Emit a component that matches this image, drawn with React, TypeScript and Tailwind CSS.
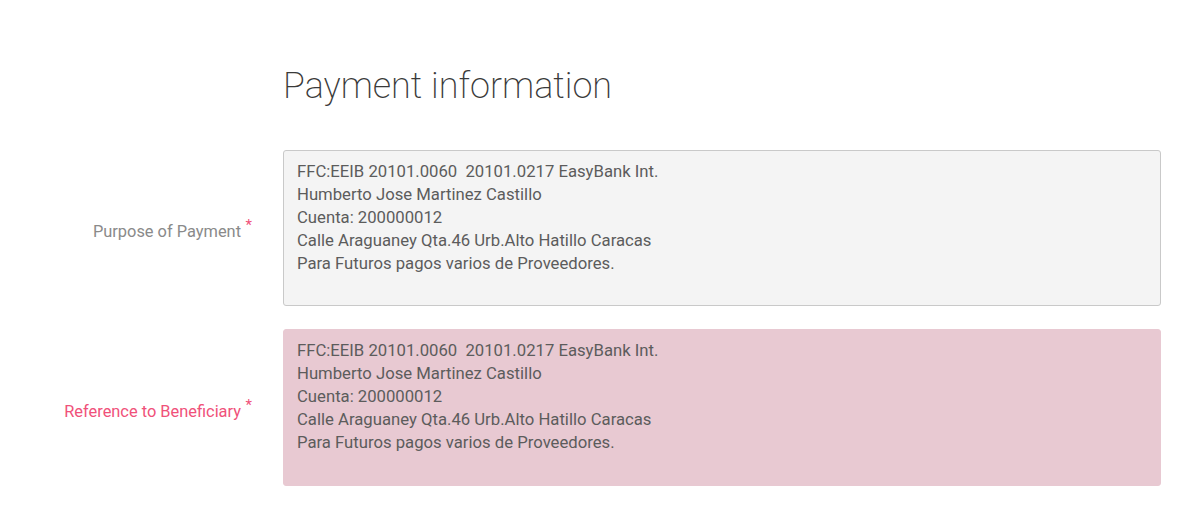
import React from "react";

const details = [
  "FFC:EEIB 20101.0060\u00a0 20101.0217 EasyBank Int.",
  "Humberto Jose Martinez Castillo",
  "Cuenta: 200000012",
  "Calle Araguaney Qta.46 Urb.Alto Hatillo Caracas",
  "Para Futuros pagos varios de Proveedores.",
];

function Field({
  label,
  invalid,
  heightClass,
}: {
  label: string;
  invalid?: boolean;
  heightClass: string;
}) {
  return (
    <div className="flex items-center">
      <div className="w-[283px] shrink-0 flex justify-end pr-[42px] pt-[9px]">
        <span
          className={
            "relative text-[16.4px] " + (invalid ? "text-[#f0517a]" : "text-[#8a8a8a]")
          }
        >
          {label}
          <span className="absolute -right-[11px] -top-[6px] text-[#f0517a] text-[15px]">*</span>
        </span>
      </div>
      <div
        className={
          "w-[878px] rounded-[3px] px-[13px] pt-[9px] text-[16.7px] leading-[23px] text-[#5c5c5c] " +
          heightClass +
          (invalid
            ? " bg-[#e8c9d2] border border-[#e8c9d2]"
            : " bg-[#f4f4f4] border border-[#c9c9c9]")
        }
      >
        {details.map((l) => (
          <div key={l} className="whitespace-pre">
            {l}
          </div>
        ))}
      </div>
    </div>
  );
}

export default function App() {
  return (
    <div
      className="w-[1200px] h-[507px] bg-white overflow-hidden"
      style={{ fontFamily: "Roboto, 'Liberation Sans', sans-serif" }}
    >
      <h1 className="ml-[283px] pt-[60px] text-[36px] leading-[52px] font-extralight text-[#3a3a3a]">
        Payment information
      </h1>
      <div className="mt-[38px] flex flex-col gap-[23px]">
        <Field label="Purpose of Payment" heightClass="h-[156px]" />
        <Field label="Reference to Beneficiary" invalid heightClass="h-[157px]" />
      </div>
    </div>
  );
}
